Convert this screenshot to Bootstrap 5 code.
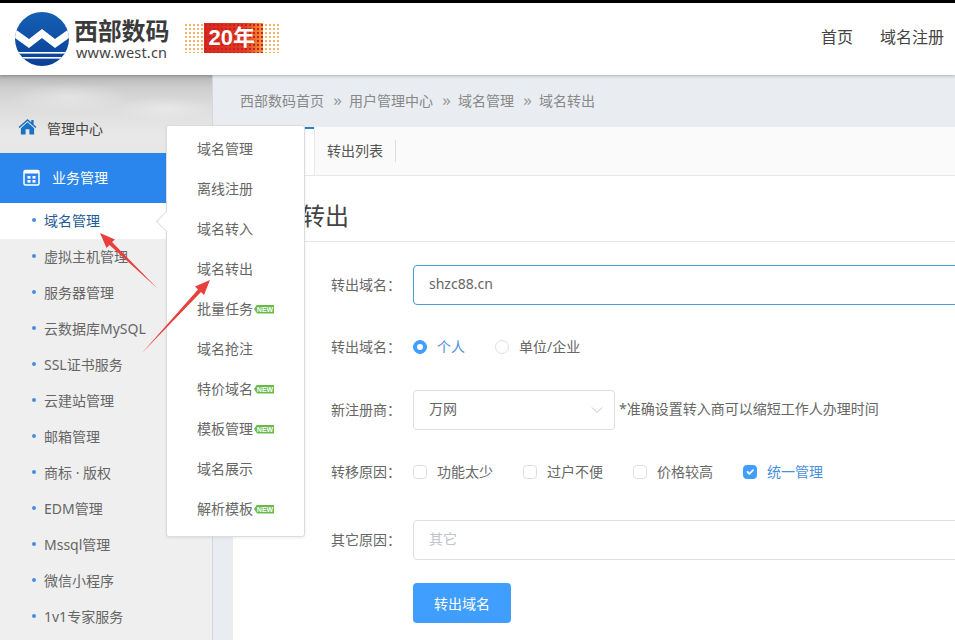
<!DOCTYPE html>
<html lang="zh-CN">
  <head>
    <meta charset="UTF-8" />
    <meta name="viewport" content="width=device-width, initial-scale=1.0" />
    <title>域名转出</title>
    <link href="https://cdn.jsdelivr.net/npm/bootstrap@5.3.0/dist/css/bootstrap.min.css" rel="stylesheet" />
    <style>
      html, body {
        height: 640px;
        overflow: hidden;
      }
      body {
        font-family: "Noto Sans", "Noto Sans CJK SC", sans-serif;
        font-size: 14px;
        color: #666;
        background-color: #fff;
        position: relative;
      }
      .top-head {
        height: 75px;
        border-top: 3px solid #000;
        background-color: #fff;
        box-shadow: 0 1px 3px rgba(0, 0, 0, 0.25);
        position: relative;
        z-index: 2;
        padding: 0 11px 0 15px;
      }
      .brand-text {
        margin-left: 5px;
      }
      .brand-name {
        font-size: 24px;
        font-weight: 700;
        line-height: 26px;
        color: #3b3b3b;
        letter-spacing: -0.2px;
      }
      .brand-url {
        font-size: 14.5px;
        line-height: 16px;
        padding-left: 2px;
        color: #444;
        letter-spacing: 0.2px;
      }
      .anniv {
        width: 97px;
        height: 30px;
        margin: 0 0 2px 15px;
        position: relative;
        background-image: radial-gradient(circle, #f6b566 1.1px, transparent 1.5px);
        background-size: 4px 4px;
      }
      .anniv-core {
        left: 20px;
        right: 18px;
        top: 0;
        bottom: 0;
        position: absolute;
        background-color: #e33b22;
        background-image: radial-gradient(circle, #c91f1f 1.1px, transparent 1.5px),
          linear-gradient(90deg, #d8281f 0, #e33b22 70%, #f39a3c 100%);
        background-size: 4px 4px, 100% 100%;
        color: #fff;
        font-family: "Liberation Sans", "Noto Sans CJK SC", sans-serif;
        font-size: 22px;
        font-weight: 700;
        line-height: 30px;
        padding-right: 4px;
        text-align: center;
      }
      .head-nav {
        padding-bottom: 4px;
      }
      .head-link {
        font-size: 16px;
        color: #444;
        text-decoration: none;
        margin-left: 27px;
      }
      .page-body {
        height: 565px;
      }
      .side-bar {
        width: 213px;
        flex: none;
        background-color: #efefef;
        border-right: 1px solid #d4d6d9;
      }
      .side-home {
        height: 78px;
        padding: 39px 0 0 18px;
        gap: 10px;
        color: #444;
        background-image: radial-gradient(ellipse 60px 14px at 70px 22px, rgba(255, 255, 255, 0.35), transparent),
          radial-gradient(ellipse 50px 12px at 165px 34px, rgba(255, 255, 255, 0.3), transparent),
          linear-gradient(180deg, #b4b4b4 0, #cdcdcd 12px, #dcdcdc 30px, #e8e8e8 60px, #e6e6e6 78px);
      }
      .side-group {
        height: 50px;
        padding: 0 0 2px 23px;
        background-color: #2a85ec;
        color: #fff;
      }
      .side-row {
        height: 36px;
        padding: 0 0 2px 32px;
        color: #666;
      }
      .side-row::before {
        content: "";
        width: 4px;
        height: 4px;
        margin-right: 8px;
        border-radius: 50%;
        background-color: #4a8ddc;
      }
      .side-row.is-on {
        background-color: #fff;
        color: #1e5a96;
      }
      .main-pane {
        flex: 1;
        min-width: 0;
        background-color: #e9edf2;
      }
      .crumbs {
        height: 52px;
        padding: 0 0 2px 27px;
        color: #888;
        gap: 7px;
      }
      .crumb-sep {
        color: #999;
        font-size: 17px;
        line-height: 20px;
        width: 11px;
        text-align: right;
      }
      .panel-body {
        margin-left: 20px;
        height: 513px;
        background-color: #fff;
      }
      .tab-bar {
        height: 49px;
        background-color: #fafafa;
        border-bottom: 1px solid #e8e8e8;
      }
      .tab-on {
        width: 82px;
        height: 48px;
        border-right: 1px solid #e8e8e8;
        box-shadow: inset 0 2px 0 #2d7fc4;
        background-color: #fff;
      }
      .tab-off {
        padding: 0 12px;
        height: 22px;
        line-height: 22px;
        color: #555;
        border-right: 1px solid #ddd;
      }
      .panel-title {
        height: 66px;
        padding: 24px 0 0 20px;
        font-size: 24px;
        line-height: 32px;
        color: #444;
        border-bottom: 1px solid #e6e6e6;
      }
      .form-area {
        padding: 23px 0 0 98px;
        width: 760px;
      }
      .form-line {
        height: 40px;
      }
      .gap-radio {
        margin-top: 22px;
      }
      .gap-select {
        margin-top: 23px;
      }
      .gap-check {
        margin-top: 22px;
      }
      .gap-other {
        margin-top: 28px;
      }
      .line-name {
        width: 82px;
        flex: none;
        color: #666;
        padding-bottom: 2px;
      }
      .form-area .form-control,
      .form-area .form-select {
        height: 40px;
        font-size: 14px;
        color: #666;
        border-color: #dcdfe6;
        border-radius: 4px;
        padding-top: 4px;
        padding-bottom: 7px;
        padding-left: 15px;
        box-shadow: none;
      }
      .form-area .form-control {
        width: 640px;
        flex: none;
      }
      .form-area .form-control.is-focus {
        border-color: #4a9fd8;
      }
      .form-area .form-control::placeholder {
        color: #c0c4cc;
      }
      .form-area .form-select {
        width: 202px;
        flex: none;
        background-image: url("data:image/svg+xml,%3csvg xmlns='http://www.w3.org/2000/svg' viewBox='0 0 12 12'%3e%3cpath fill='none' stroke='%23c0c4cc' d='M1 3.5l5 5 5-5'/%3e%3c/svg%3e");
        background-size: 12px 12px;
        background-position: right 11px center;
      }
      .select-hint {
        margin-left: 4px;
        padding-bottom: 3px;
        color: #666;
      }
      .pick {
        min-height: 0;
        padding: 0 0 2px;
        margin: 0;
        gap: 10px;
        color: #666;
      }
      .pick .form-check-input {
        float: none;
        width: 14px;
        height: 14px;
        margin: 2px 0 0;
        border-color: #dcdfe6;
        box-shadow: none;
      }
      .pick .form-check-input:checked {
        background-color: #409eff;
        border-color: #409eff;
      }
      .pick.is-on {
        color: #4a8fdc;
      }
      .pick-set {
        gap: 30px;
      }
      .go-btn {
        width: 98px;
        height: 40px;
        margin: 23px 0 0 82px;
        background-color: #409eff;
        border: 0;
        border-radius: 4px;
        color: #fff;
        font-size: 14px;
      }
      .pop-menu {
        position: absolute;
        left: 166px;
        top: 125px;
        width: 139px;
        height: 412px;
        padding: 3px 0 0 30px;
        background-color: #fff;
        border: 1px solid #dcdcdc;
        border-radius: 3px;
        box-shadow: 0 1px 3px rgba(0, 0, 0, 0.08);
        z-index: 3;
      }
      .pop-menu::before {
        content: "";
        position: absolute;
        left: -8px;
        top: 88px;
        width: 15px;
        height: 15px;
        background-color: #fff;
        border-left: 1px solid #dcdcdc;
        border-bottom: 1px solid #dcdcdc;
        transform: rotate(45deg);
      }
      .pop-row {
        height: 40px;
        padding-bottom: 2px;
        color: #666;
      }
      .new-tag {
        width: 20px;
        height: 9px;
        margin: 2px 0 0 1px;
        background-color: #68bb4b;
        color: #fff;
        font-family: "Liberation Sans", sans-serif;
        font-size: 7px;
        font-weight: 700;
        line-height: 9px;
        text-align: center;
        padding-left: 2px;
        clip-path: polygon(3px 0, 100% 0, 100% 100%, 3px 100%, 0 50%);
      }
      .arrow-layer {
        position: absolute;
        left: 0;
        top: 0;
        z-index: 4;
        pointer-events: none;
      }
    </style>
  </head>
  <body>
    <header class="top-head d-flex align-items-center">
      <svg width="54" height="54" viewBox="0 0 54 54" class="flex-shrink-0" aria-hidden="true">
        <defs>
          <clipPath id="logoClip"><circle cx="27" cy="27" r="27" /></clipPath>
          <linearGradient id="logoFill" x1="0" y1="0" x2="0" y2="1">
            <stop offset="0" stop-color="#1560b4" />
            <stop offset="1" stop-color="#0a4096" />
          </linearGradient>
        </defs>
        <g clip-path="url(#logoClip)">
          <rect width="54" height="54" fill="url(#logoFill)" />
          <path d="M0 17L14 27 27 17 40 27 54 17V26L40 36 27 26 14 36 0 26Z" fill="#fff" />
          <rect y="40" width="54" height="1.6" fill="#fff" />
          <rect y="45" width="54" height="1.6" fill="#fff" />
        </g>
      </svg>
      <div class="brand-text">
        <div class="brand-name">西部数码</div>
        <div class="brand-url">www.west.cn</div>
      </div>
      <div class="anniv">
        <div class="anniv-core">20年</div>
      </div>
      <nav class="head-nav ms-auto d-flex">
        <a class="head-link" href="#">首页</a>
        <a class="head-link" href="#">域名注册</a>
      </nav>
    </header>

    <div class="page-body d-flex">
      <aside class="side-bar">
        <div class="side-home d-flex align-items-start">
          <svg width="19" height="17" viewBox="0 0 20 18" class="mt-1" aria-hidden="true">
            <path d="M10 1L0.5 9.5 1.6 10.700 10 3.200 18.400 10.700 19.500 9.500 16.500 6.800V2H14V4.600Z" fill="#1a72c4" />
            <path d="M10 4.600L3 10.800V17.500H8V12H12V17.500H17V10.800Z" fill="#1a72c4" />
          </svg>
          <span class="pt-1">管理中心</span>
        </div>
        <div class="side-group d-flex align-items-center gap-2">
          <svg width="17" height="17" viewBox="0 0 17 17" aria-hidden="true">
            <rect x="1" y="1.500" width="15" height="14.500" rx="1.500" fill="none" stroke="#fff" stroke-width="1.500" />
            <rect x="1" y="1" width="15" height="3.500" fill="#fff" />
            <rect x="4.500" y="7" width="3" height="2.600" fill="#fff" />
            <rect x="9.500" y="7" width="3" height="2.600" fill="#fff" />
            <rect x="4.500" y="11" width="3" height="2.600" fill="#fff" />
            <rect x="9.500" y="11" width="3" height="2.600" fill="#fff" />
          </svg>
          <span class="ms-1">业务管理</span>
        </div>
        <ul class="list-unstyled m-0">
          <li class="side-row is-on d-flex align-items-center">域名管理</li>
          <li class="side-row d-flex align-items-center">虚拟主机管理</li>
          <li class="side-row d-flex align-items-center">服务器管理</li>
          <li class="side-row d-flex align-items-center">云数据库MySQL</li>
          <li class="side-row d-flex align-items-center">SSL证书服务</li>
          <li class="side-row d-flex align-items-center">云建站管理</li>
          <li class="side-row d-flex align-items-center">邮箱管理</li>
          <li class="side-row d-flex align-items-center">商标 · 版权</li>
          <li class="side-row d-flex align-items-center">EDM管理</li>
          <li class="side-row d-flex align-items-center">Mssql管理</li>
          <li class="side-row d-flex align-items-center">微信小程序</li>
          <li class="side-row d-flex align-items-center">1v1专家服务</li>
        </ul>
      </aside>

      <main class="main-pane">
        <div class="crumbs d-flex align-items-center">
          <span>西部数码首页</span><span class="crumb-sep">»</span>
          <span>用户管理中心</span><span class="crumb-sep">»</span>
          <span>域名管理</span><span class="crumb-sep">»</span>
          <span>域名转出</span>
        </div>
        <div class="panel-body">
          <div class="tab-bar d-flex align-items-center">
            <div class="tab-on"></div>
            <div class="tab-off">转出列表</div>
          </div>
          <div class="panel-title">域名转出</div>
          <form class="form-area">
            <div class="form-line d-flex align-items-center">
              <label class="line-name" for="domainName">转出域名：</label>
              <input id="domainName" type="text" class="form-control is-focus" value="shzc88.cn" />
            </div>
            <div class="form-line gap-radio d-flex align-items-center">
              <span class="line-name">转出域名：</span>
              <div class="d-flex pick-set">
                <label class="form-check pick is-on d-flex align-items-center">
                  <input class="form-check-input" type="radio" name="ownerType" checked />个人
                </label>
                <label class="form-check pick d-flex align-items-center">
                  <input class="form-check-input" type="radio" name="ownerType" />单位/企业
                </label>
              </div>
            </div>
            <div class="form-line gap-select d-flex align-items-center">
              <label class="line-name" for="registrar">新注册商：</label>
              <select id="registrar" class="form-select">
                <option>万网</option>
              </select>
              <span class="select-hint">*准确设置转入商可以缩短工作人办理时间</span>
            </div>
            <div class="form-line gap-check d-flex align-items-center">
              <span class="line-name">转移原因：</span>
              <div class="d-flex pick-set">
                <label class="form-check pick d-flex align-items-center">
                  <input class="form-check-input" type="checkbox" />功能太少
                </label>
                <label class="form-check pick d-flex align-items-center">
                  <input class="form-check-input" type="checkbox" />过户不便
                </label>
                <label class="form-check pick d-flex align-items-center">
                  <input class="form-check-input" type="checkbox" />价格较高
                </label>
                <label class="form-check pick is-on d-flex align-items-center">
                  <input class="form-check-input" type="checkbox" checked />统一管理
                </label>
              </div>
            </div>
            <div class="form-line gap-other d-flex align-items-center">
              <label class="line-name" for="otherReason">其它原因：</label>
              <input id="otherReason" type="text" class="form-control" placeholder="其它" />
            </div>
            <button type="button" class="btn go-btn d-block">转出域名</button>
          </form>
        </div>
      </main>
    </div>

    <div class="pop-menu">
      <div class="pop-row d-flex align-items-center">域名管理</div>
      <div class="pop-row d-flex align-items-center">离线注册</div>
      <div class="pop-row d-flex align-items-center">域名转入</div>
      <div class="pop-row d-flex align-items-center">域名转出</div>
      <div class="pop-row d-flex align-items-center">批量任务<span class="new-tag">NEW</span></div>
      <div class="pop-row d-flex align-items-center">域名抢注</div>
      <div class="pop-row d-flex align-items-center">特价域名<span class="new-tag">NEW</span></div>
      <div class="pop-row d-flex align-items-center">模板管理<span class="new-tag">NEW</span></div>
      <div class="pop-row d-flex align-items-center">域名展示</div>
      <div class="pop-row d-flex align-items-center">解析模板<span class="new-tag">NEW</span></div>
    </div>

    <svg class="arrow-layer" width="955" height="640" viewBox="0 0 955 640" aria-hidden="true">
      <path d="M157.500 288.500L112 242 115 239.500 100 233 106.500 248 109.500 245Z" fill="#e8403c" />
      <path d="M141.500 353.500L201 292 204 295 210 280 195 286.500 198 289.500Z" fill="#e8403c" />
    </svg>
  </body>
</html>
